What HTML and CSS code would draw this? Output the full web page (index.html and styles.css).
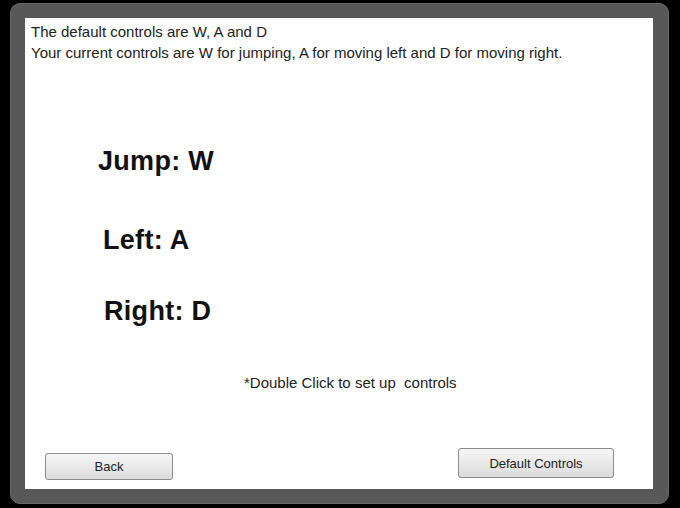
FILE: index.html
```html
<!DOCTYPE html>
<html lang="en">

<head>
    <meta charset="UTF-8">
    <meta name="viewport" content="width=device-width, initial-scale=1.0">
    <title>Controls</title>
    <link rel="stylesheet" href="styles.css">
</head>

<body>
    <div class="frame">
        <div class="panel">
            <div class="intro">
                <p>The default controls are W, A and D</p>
                <p>Your current controls are W for jumping, A for moving left and D for moving right.</p>
            </div>
            <div class="keys">
                <div class="key key-jump">Jump: W</div>
                <div class="key key-left">Left: A</div>
                <div class="key key-right">Right: D</div>
            </div>
            <p class="hint">*Double Click to set up&nbsp; controls</p>
            <div class="buttons">
                <button class="btn btn-back">Back</button>
                <button class="btn btn-default">Default Controls</button>
            </div>
        </div>
    </div>
</body>

</html>
```

FILE: styles.css
```css
html, body {
    margin: 0;
    padding: 0;
    background: #000000;
}

body {
    width: 680px;
    height: 508px;
    font-family: "Liberation Sans", Arial, sans-serif;
    color: #222222;
}

.frame {
    margin: 3px 0 0 10px;
    width: 659px;
    height: 501px;
    box-sizing: border-box;
    padding: 15px 15px 13px 15px;
    background: #585858;
    border: 1px solid #6a6a6a;
    border-radius: 10px;
}

.panel {
    display: flex;
    flex-direction: column;
    height: 100%;
    box-sizing: border-box;
    padding: 0 0 0 6px;
    margin: -1px 0 0 -1px;
    background: #ffffff;
}

.intro {
    padding-top: 3px;
}

.intro p {
    margin: 0;
    font-size: 15px;
    line-height: 21px;
}

.keys {
    margin-top: 83px;
}

.key {
    font-size: 27px;
    font-weight: bold;
    color: #111111;
    line-height: 30px;
    letter-spacing: 0.3px;
}

.key-jump {
    margin-left: 67px;
}

.key-left {
    margin-top: 49px;
    margin-left: 72px;
}

.key-right {
    margin-top: 41px;
    margin-left: 73px;
}

.hint {
    margin: 48px 0 0 213px;
    font-size: 15px;
    line-height: 17px;
}

.buttons {
    display: flex;
    justify-content: space-between;
    align-items: flex-end;
    margin-top: auto;
    padding: 0 39px 9px 14px;
}

.btn {
    font-family: "Liberation Sans", Arial, sans-serif;
    font-size: 13px;
    color: #222222;
    background: linear-gradient(#f6f6f6, #dcdcdc);
    border: 1px solid #8c8c8c;
    border-radius: 3px;
    padding: 0;
}

.btn-back {
    width: 128px;
    height: 27px;
}

.btn-default {
    width: 156px;
    height: 30px;
    margin-bottom: 2px;
}
```
